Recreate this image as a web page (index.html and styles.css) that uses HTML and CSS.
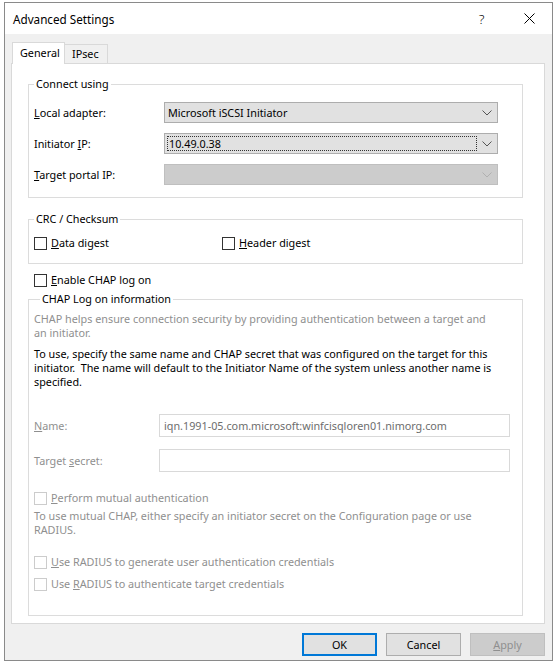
FILE: index.html
```html
<!DOCTYPE html>
<html>
<head>
<meta charset="utf-8">
<title>Advanced Settings</title>
<link rel="stylesheet" href="styles.css">
</head>
<body>
<div class="dialog">
  <div class="titlebar">
    <span class="title">Advanced Settings</span>
    <span class="cap-btn help">?</span>
    <span class="cap-btn close"><svg width="11" height="11" viewBox="0 0 11 11"><path d="M0.5 0.5L10.5 10.5M10.5 0.5L0.5 10.5" stroke="#000" stroke-width="1" fill="none"/></svg></span>
  </div>
  <div class="tabs">
    <div class="tab active">General</div>
    <div class="tab">IPsec</div>
  </div>
  <div class="panel">
    <fieldset class="group connect">
      <legend>Connect using</legend>
      <div class="form-row">
        <span class="lbl"><u>L</u>ocal adapter:</span>
        <div class="combo"><span class="combo-text">Microsoft iSCSI Initiator</span><span class="chev"><svg width="10" height="6" viewBox="0 0 10 6"><path d="M0.5 0.5L5 5L9.5 0.5" stroke="#555" fill="none"/></svg></span></div>
      </div>
      <div class="form-row">
        <span class="lbl">Initiator <u>I</u>P:</span>
        <div class="combo"><span class="combo-text focus">10.49.0.38</span><span class="chev"><svg width="10" height="6" viewBox="0 0 10 6"><path d="M0.5 0.5L5 5L9.5 0.5" stroke="#555" fill="none"/></svg></span></div>
      </div>
      <div class="form-row">
        <span class="lbl"><u>T</u>arget portal IP:</span>
        <div class="combo disabled"><span class="combo-text"></span><span class="chev"><svg width="10" height="6" viewBox="0 0 10 6"><path d="M0.5 0.5L5 5L9.5 0.5" stroke="#b0b0b0" fill="none"/></svg></span></div>
      </div>
    </fieldset>

    <fieldset class="group crc">
      <legend>CRC / Checksum</legend>
      <div class="check-line">
        <label class="check col1"><span class="box"></span><span><u>D</u>ata digest</span></label>
        <label class="check"><span class="box"></span><span><u>H</u>eader digest</span></label>
      </div>
    </fieldset>

    <label class="check enable"><span class="box"></span><span><u>E</u>nable CHAP log on</span></label>

    <fieldset class="group chap">
      <legend>CHAP Log on information</legend>
      <p class="txt dim">CHAP helps ensure connection security by providing authentication between a target and<br>an initiator.</p>
      <p class="txt p2">To use, specify the same name and CHAP secret that was configured on the target for this<br>initiator.&nbsp; The name will default to the Initiator Name of the system unless another name is<br>specified.</p>
      <div class="field-row name-row">
        <span class="flbl dim"><u>N</u>ame:</span>
        <div class="input">iqn.1991-05.com.microsoft:winfcisqloren01.nimorg.com</div>
      </div>
      <div class="field-row secret-row">
        <span class="flbl dim">Target <u>s</u>ecret:</span>
        <div class="input"></div>
      </div>
      <label class="check dis mutual"><span class="box"></span><span><u>P</u>erform mutual authentication</span></label>
      <p class="txt dim p3">To use mutual CHAP, either specify an initiator secret on the Configuration page or use<br>RADIUS.</p>
      <label class="check dis radius1"><span class="box"></span><span><u>U</u>se RADIUS to generate user authentication credentials</span></label>
      <label class="check dis radius2"><span class="box"></span><span>Use <u>R</u>ADIUS to authenticate target credentials</span></label>
    </fieldset>
  </div>
  <div class="buttons">
    <div class="btn default">OK</div>
    <div class="btn">Cancel</div>
    <div class="btn disabled"><u>A</u>pply</div>
  </div>
</div>
</body>
</html>
```
FILE: styles.css
```css
html, body {
  margin: 0;
  padding: 0;
  background: #ffffff;
}
body {
  font-family: "Noto Sans", "Open Sans", sans-serif;
  font-size: 10.8px;
  color: #000;
  width: 557px;
  height: 665px;
  overflow: hidden;
}
u { text-decoration: underline; text-underline-offset: 1px; }

.dialog {
  margin: 2px 0 0 4px;
  width: 549px;
  box-sizing: border-box;
  border: 1px solid #8a8a8a;
  background: #f0f0f0;
  padding-bottom: 4px;
}

.titlebar {
  height: 31px;
  background: #ffffff;
  display: flex;
  align-items: center;
}
.title {
  padding-left: 8px;
  font-size: 11.7px;
  flex: 1;
}
.cap-btn {
  width: 46px;
  height: 31px;
  display: flex;
  align-items: center;
  justify-content: center;
}
.help {
  font-size: 13.5px;
  font-weight: 300;
  padding-right: 3px;
  box-sizing: border-box;
}

.tabs {
  display: flex;
  align-items: flex-end;
  margin: 8px 0 -1px 7px;
  position: relative;
  z-index: 1;
}
.tab {
  box-sizing: border-box;
  border: 1px solid #d9d9d9;
  border-bottom: none;
  line-height: 18px;
  height: 19px;
  padding: 0 7px;
  margin-bottom: 1px;
  background: #f0f0f0;
}
.tab.active {
  height: 22px;
  line-height: 20px;
  width: 53px;
  background: #ffffff;
  margin-bottom: 0;
}
.tab + .tab {
  border-left: none;
  width: 43px;
}

.panel {
  margin-left: 6px;
  width: 534px;
  height: 561px;
  box-sizing: border-box;
  border: 1px solid #d9d9d9;
  background: #ffffff;
  padding: 0 21px 0 16px;
  overflow: hidden;
}

.group {
  margin: 0;
  border: 1px solid #dcdcdc;
  padding: 0 5px;
  min-width: 0;
}
.group legend {
  padding: 0 2px;
  line-height: 14px;
}
.connect {
  margin-top: 13px;
  padding-top: 11px;
  padding-bottom: 12px;
  display: flex;
  flex-direction: column;
  gap: 10px;
}
.form-row {
  display: flex;
  align-items: center;
  height: 21px;
}
.lbl {
  width: 130px;
}
.combo {
  width: 334px;
  height: 21px;
  box-sizing: border-box;
  border: 1px solid #adadad;
  background: #e1e1e1;
  display: flex;
  align-items: stretch;
}
.combo-text {
  flex: 1;
  padding-left: 3px;
  line-height: 19px;
  white-space: nowrap;
}
.combo-text.focus {
  margin: 2px 0 2px 2px;
  padding-left: 1px;
  line-height: 13px;
  border: 1px dotted #333;
}
.chev {
  width: 20px;
  display: flex;
  align-items: center;
  justify-content: center;
}
.combo.disabled {
  background: #cccccc;
  border-color: #bfbfbf;
}

.crc {
  margin-top: 14px;
  padding-top: 10px;
  padding-bottom: 13px;
}
.check-line {
  display: flex;
}
.check {
  display: flex;
  align-items: center;
  height: 14px;
  line-height: 14px;
  white-space: nowrap;
}
.check .box {
  width: 13px;
  height: 13px;
  box-sizing: border-box;
  border: 1px solid #333333;
  background: #ffffff;
  margin-right: 4px;
  flex: none;
}
.check.col1 {
  width: 188px;
}
.check.dis {
  color: #8f8f8f;
}
.check.dis .box {
  border-color: #cccccc;
}
.enable {
  margin: 9px 0 0 6px;
}

.chap {
  margin-top: 5px;
  padding-top: 6px;
  padding-bottom: 24px;
}
.chap legend {
  margin-left: 6px;
}
.txt {
  margin: 0;
  line-height: 14px;
  white-space: nowrap;
}
.dim {
  color: #8f8f8f;
}
.p2 {
  margin-top: 7px;
}
.field-row {
  display: flex;
  align-items: center;
  height: 23px;
}
.name-row { margin-top: 25px; }
.secret-row { margin-top: 12px; }
.flbl {
  width: 125px;
}
.input {
  width: 351px;
  height: 23px;
  box-sizing: border-box;
  border: 1px solid #d9d9d9;
  background: #ffffff;
  color: #6d6d6d;
  padding-left: 4px;
  line-height: 21px;
  white-space: nowrap;
}
.mutual { margin-top: 19px; }
.p3 { margin-top: 4px; }
.radius1 { margin-top: 18px; }
.radius2 { margin-top: 8px; }

.buttons {
  display: flex;
  justify-content: flex-end;
  gap: 9px;
  margin-top: 9px;
  padding-right: 7px;
}
.btn {
  width: 75px;
  height: 23px;
  box-sizing: border-box;
  border: 1px solid #adadad;
  background: #e1e1e1;
  display: flex;
  align-items: center;
  justify-content: center;
}
.btn.default {
  border: 2px solid #0078d7;
}
.btn.disabled {
  background: #cccccc;
  border-color: #bfbfbf;
  color: #8f8f8f;
}
```
